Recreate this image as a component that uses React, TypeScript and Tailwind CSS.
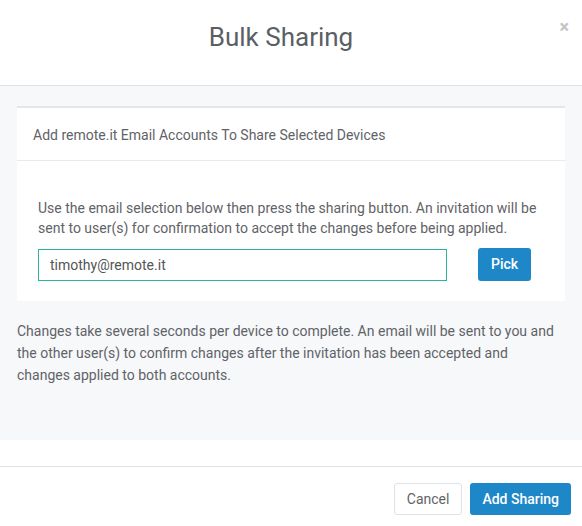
export default function App() {
  return (
    <div className="w-[582px] h-[526px] bg-white flex flex-col font-['Roboto',sans-serif] text-[#5f6368] overflow-hidden">
      {/* header */}
      <div className="relative h-[86px] flex items-center justify-center pr-[20px] border-b border-[#dfe2e6]">
        <h2 className="text-[26px] text-[#5a5f64] -mt-[11px]">Bulk Sharing</h2>
        <button className="absolute right-[13px] top-[18px] text-[#c4c4c4] text-[18px] font-bold leading-none">
          ×
        </button>
      </div>

      {/* body */}
      <div className="bg-[#f7f8fa] h-[354px] px-[17px] pt-[20px]">
        <div className="bg-white border-t-[2px] border-[#e3e6ea]">
          <div className="h-[53px] flex items-center pt-[3px] px-[16px] border-b border-[#e8eaed] text-[14px] text-[#5f6368]">
            Add remote.it Email Accounts To Share Selected Devices
          </div>
          <div className="px-[21px] pt-[37px] pb-[20px]">
            <p className="text-[14px] leading-[20px] text-[#5f6368]">
              Use the email selection below then press the sharing button. An invitation will be sent to user(s) for
              confirmation to accept the changes before being applied.
            </p>
            <div className="flex items-center mt-[10px]">
              <input
                defaultValue="timothy@remote.it"
                className="w-[409px] h-[32px] border border-[#2ab49b] px-[11px] text-[14px] text-[#555] outline-none"
              />
              <button className="ml-[31px] h-[33px] px-[13px] bg-[#1d87c8] text-white text-[14px] font-medium rounded-[3px]">
                Pick
              </button>
            </div>
          </div>
        </div>
        <p className="mt-[19px] mr-[8px] text-[14px] leading-[22px] text-[#5f6368]">
          Changes take several seconds per device to complete. An email will be sent to you and the other user(s) to
          confirm changes after the invitation has been accepted and changes applied to both accounts.
        </p>
      </div>

      {/* footer */}
      <div className="mt-[26px] border-t border-[#dfe2e6] flex justify-end gap-[8px] pt-[16px] pr-[11px]">
        <button className="h-[32px] px-[12px] border border-[#dfe2e6] bg-white text-[14px] text-[#5f6368] rounded-[3px]">
          Cancel
        </button>
        <button className="h-[32px] px-[12px] bg-[#1d87c8] text-white text-[14px] font-medium rounded-[3px]">
          Add Sharing
        </button>
      </div>
    </div>
  );
}
